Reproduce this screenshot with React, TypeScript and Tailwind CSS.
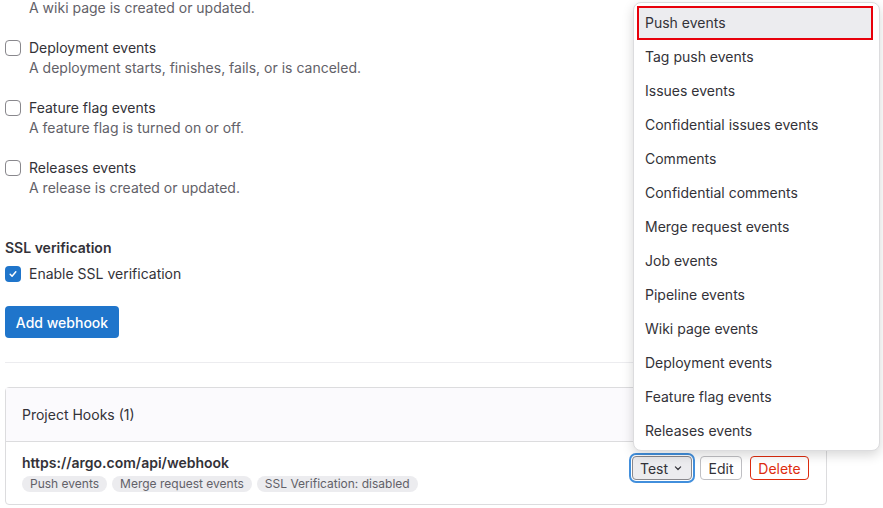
import React from "react";

const font = { fontFamily: "Inter, 'Noto Sans', sans-serif" };

function Box({ checked }: { checked?: boolean }) {
  if (checked) {
    return (
      <span className="mt-[2px] flex h-4 w-4 shrink-0 items-center justify-center rounded-[4px] bg-[#1f75cb]">
        <svg width="10" height="10" viewBox="0 0 16 16">
          <path d="M3.5 8.5l3 3 6-7" fill="none" stroke="white" strokeWidth="2.4" strokeLinecap="round" strokeLinejoin="round" />
        </svg>
      </span>
    );
  }
  return <span className="mt-[2px] h-4 w-4 shrink-0 rounded-[4px] border border-[#89888d] bg-white" />;
}

function EventRow({ label, desc }: { label: string; desc: string }) {
  return (
    <div className="mb-5 flex gap-2">
      <Box />
      <div>
        <div className="leading-5 text-[#333238]">{label}</div>
        <div className="leading-5 text-[#626168]">{desc}</div>
      </div>
    </div>
  );
}

const items = [
  "Push events",
  "Tag push events",
  "Issues events",
  "Confidential issues events",
  "Comments",
  "Confidential comments",
  "Merge request events",
  "Job events",
  "Pipeline events",
  "Wiki page events",
  "Deployment events",
  "Feature flag events",
  "Releases events",
];

function Badge({ children }: { children: React.ReactNode }) {
  return (
    <span className="rounded-full bg-[#ececef] px-2 text-[12px] leading-4 text-[#626168]">{children}</span>
  );
}

export default function App() {
  return (
    <div className="relative h-[508px] w-[883px] overflow-hidden bg-white text-[14px] text-[#333238]" style={font}>
      <div className="flex w-[827px] flex-col items-stretch pl-[5px]">
        <div className="-mt-[2px] mb-5 pl-6 leading-5 text-[#626168]">A wiki page is created or updated.</div>
        <EventRow label="Deployment events" desc="A deployment starts, finishes, fails, or is canceled." />
        <EventRow label="Feature flag events" desc="A feature flag is turned on or off." />
        <EventRow label="Releases events" desc="A release is created or updated." />
        <div className="mt-[20px] font-semibold leading-5 text-[#333238]">SSL verification</div>
        <div className="mt-[6px] flex gap-2">
          <Box checked />
          <span className="leading-5">Enable SSL verification</span>
        </div>
        <button className="mt-[22px] h-8 w-[114px] rounded-[4px] bg-[#1f75cb] text-[14px] font-medium text-white">
          Add webhook
        </button>
        <div className="mt-6 h-px w-full bg-[#ececef]" />
        <div className="mt-6 rounded-[4px] border border-[#dcdcde]">
          <div className="flex h-[54px] items-center border-b border-[#dcdcde] bg-[#fbfafd] px-4 leading-5">
            Project Hooks (1)
          </div>
          <div className="flex items-start justify-between px-4 pb-[12px] pt-[11px]">
            <div>
              <div className="font-semibold leading-5">https://argo.com/api/webhook</div>
              <div className="mt-[3px] flex gap-[5px]">
                <Badge>Push events</Badge>
                <Badge>Merge request events</Badge>
                <Badge>SSL Verification: disabled</Badge>
              </div>
            </div>
            <div className="mr-[1px] mt-[3px] flex items-center gap-2">
              <button className="flex h-6 w-[60px] items-center justify-center gap-1 rounded-[4px] border border-[#89888d] bg-[#ececef] shadow-[0_0_0_1px_#fff,0_0_0_3px_#428fdc]">
                <span>Test</span>
                <svg width="12" height="12" viewBox="0 0 16 16">
                  <path d="M4.5 6.5L8 10l3.5-3.5" fill="none" stroke="#333238" strokeWidth="1.6" strokeLinecap="round" strokeLinejoin="round" />
                </svg>
              </button>
              <button className="h-6 w-[42px] rounded-[4px] border border-[#bfbfc3] bg-white">Edit</button>
              <button className="h-6 w-[59px] rounded-[4px] border border-[#dd2b0e] bg-white text-[#dd2b0e]">Delete</button>
            </div>
          </div>
        </div>
      </div>

      <div className="absolute left-[633px] top-[2px] w-[247px] rounded-lg border border-[#dcdcde] bg-white pb-[2px] pl-[3px] pr-[6px] pt-[3px] shadow-[0_4px_12px_rgba(5,5,6,0.16)]">
        {items.map((it, i) => (
          <div
            key={it}
            className={
              i === 0
                ? "flex h-[34px] items-center border-2 border-[#e8000b] bg-[#ececef] pl-[6px] leading-5"
                : "flex h-[34px] items-center pl-2 leading-5"
            }
          >
            {it}
          </div>
        ))}
      </div>
    </div>
  );
}
